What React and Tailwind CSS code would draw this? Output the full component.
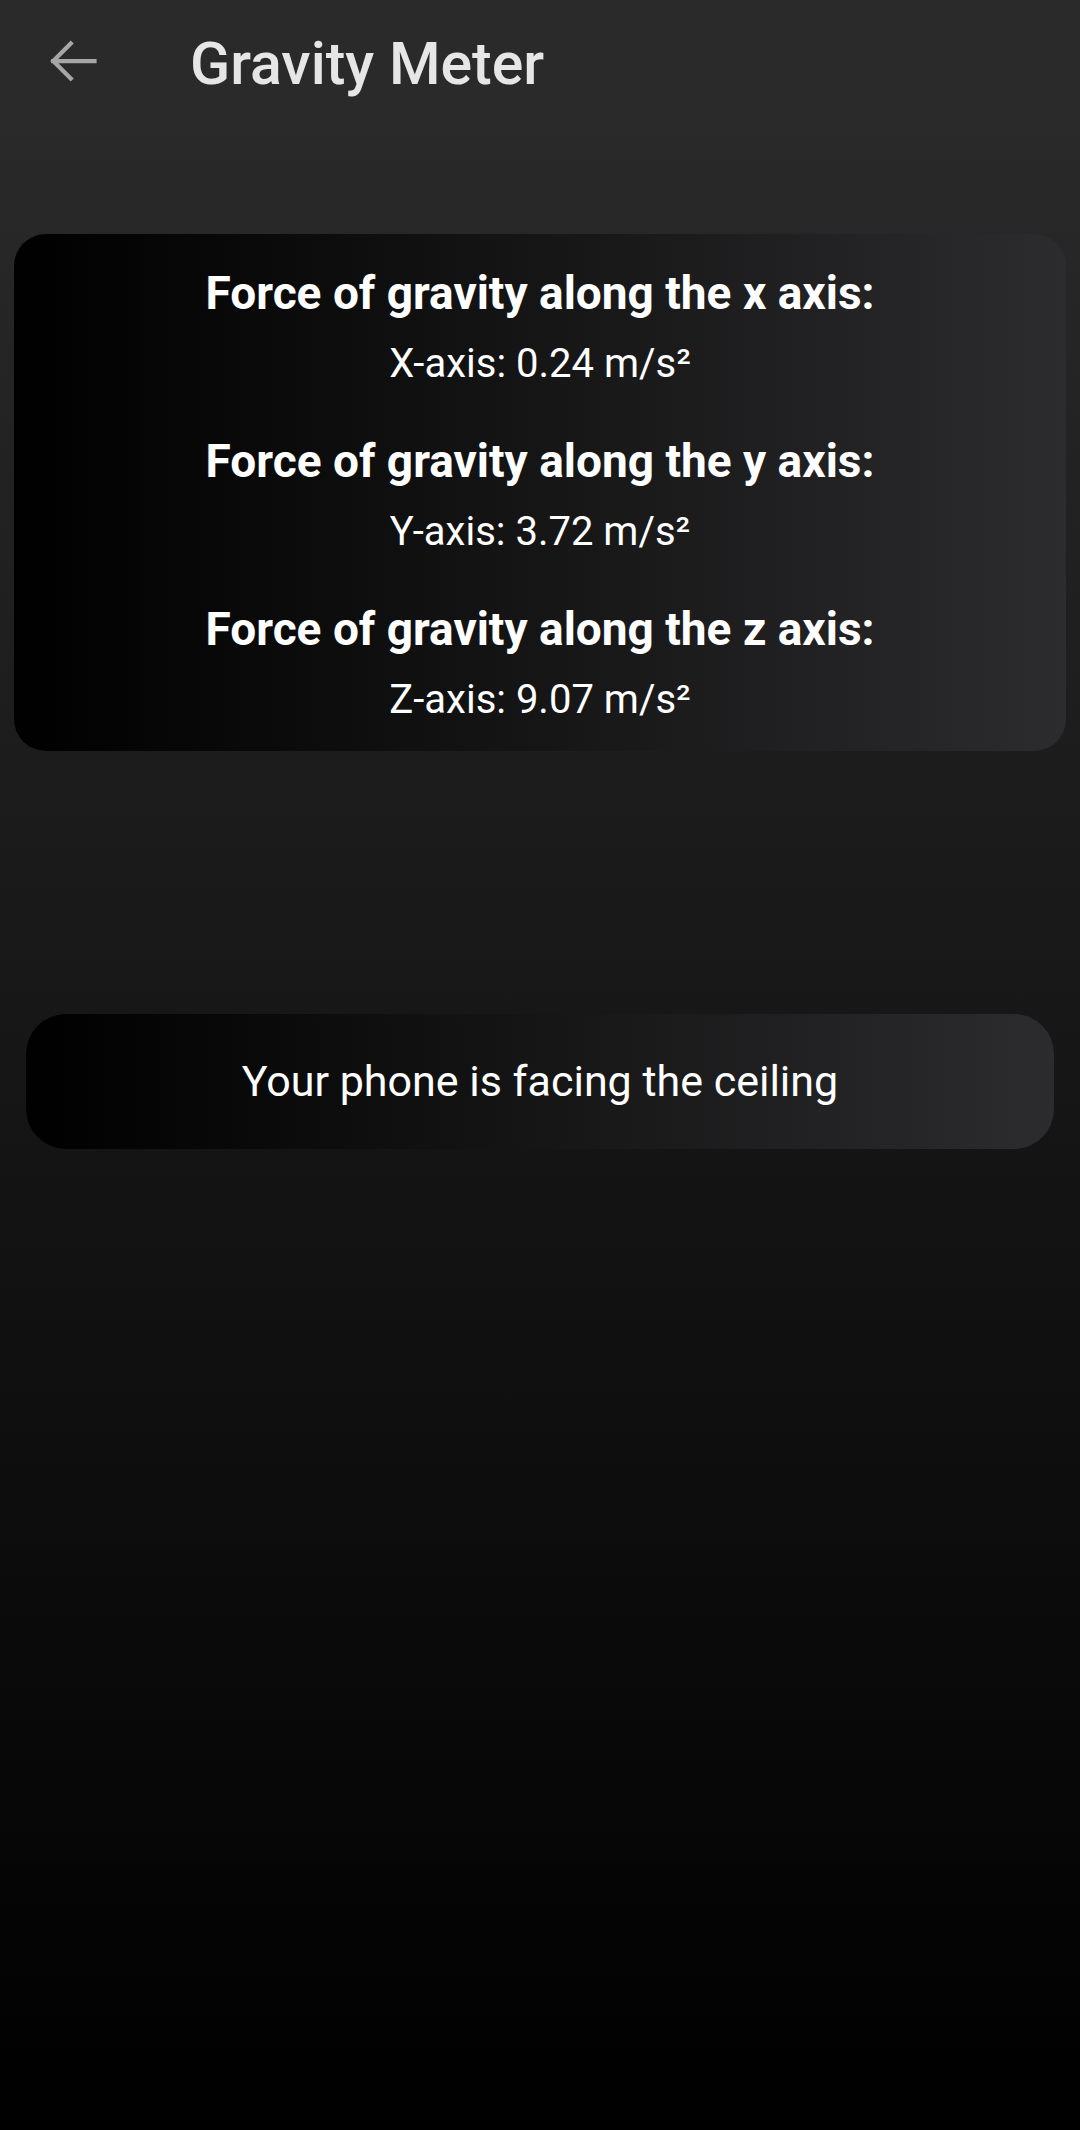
import React from 'react';

const readings = [
    { axis: 'x', label: 'X-axis', value: '0.24' },
    { axis: 'y', label: 'Y-axis', value: '3.72' },
    { axis: 'z', label: 'Z-axis', value: '9.07' },
];

const BackArrow = () => (
    <svg width="60" height="60" viewBox="0 0 24 24" fill="none">
        <path d="M21 12H4.5M11.5 5l-7 7 7 7" stroke="#a6a6a6" strokeWidth="1.7" strokeLinecap="square" />
    </svg>
);

export default function App() {
    return (
        <div
            className="min-h-[2130px] w-[1080px] flex flex-col bg-linear-to-b/srgb from-[#2c2c2d] to-[#000000] text-white"
            style={{ fontFamily: 'Roboto, "Noto Sans", sans-serif' }}
        >
            {/* Toolbar */}
            <div className="h-[136px] bg-[#2a2a2a] flex items-start">
                <div className="ml-[42px] mt-[31px]">
                    <BackArrow />
                </div>
                <div className="ml-[88px] mt-[26px] text-[59px] leading-[76px] font-medium text-[#e6e6e6]">
                    Gravity Meter
                </div>
            </div>

            {/* Readings card */}
            <div className="mx-[14px] mt-[98px] h-[517px] rounded-[32px] bg-linear-to-r/srgb from-[#000000] to-[#2c2b2d] pt-[31px] flex flex-col items-center">
                {readings.map((r, i) => (
                    <div key={r.axis} className={`flex flex-col items-center ${i > 0 ? 'mt-[41px]' : ''}`}>
                        <div className="text-[46px] leading-[56px] font-bold">
                            Force of gravity along the {r.axis} axis:
                        </div>
                        <div className="mt-[15px] text-[40px] leading-[56px]">
                            {r.label}: {r.value} m/s²
                        </div>
                    </div>
                ))}
            </div>

            {/* Orientation status */}
            <div className="mx-[26px] mt-[263px] h-[135px] rounded-[40px] bg-linear-to-r/srgb from-[#000000] to-[#2c2b2d] flex items-center justify-center">
                <span className="text-[43px]">Your phone is facing the ceiling</span>
            </div>
        </div>
    );
}
